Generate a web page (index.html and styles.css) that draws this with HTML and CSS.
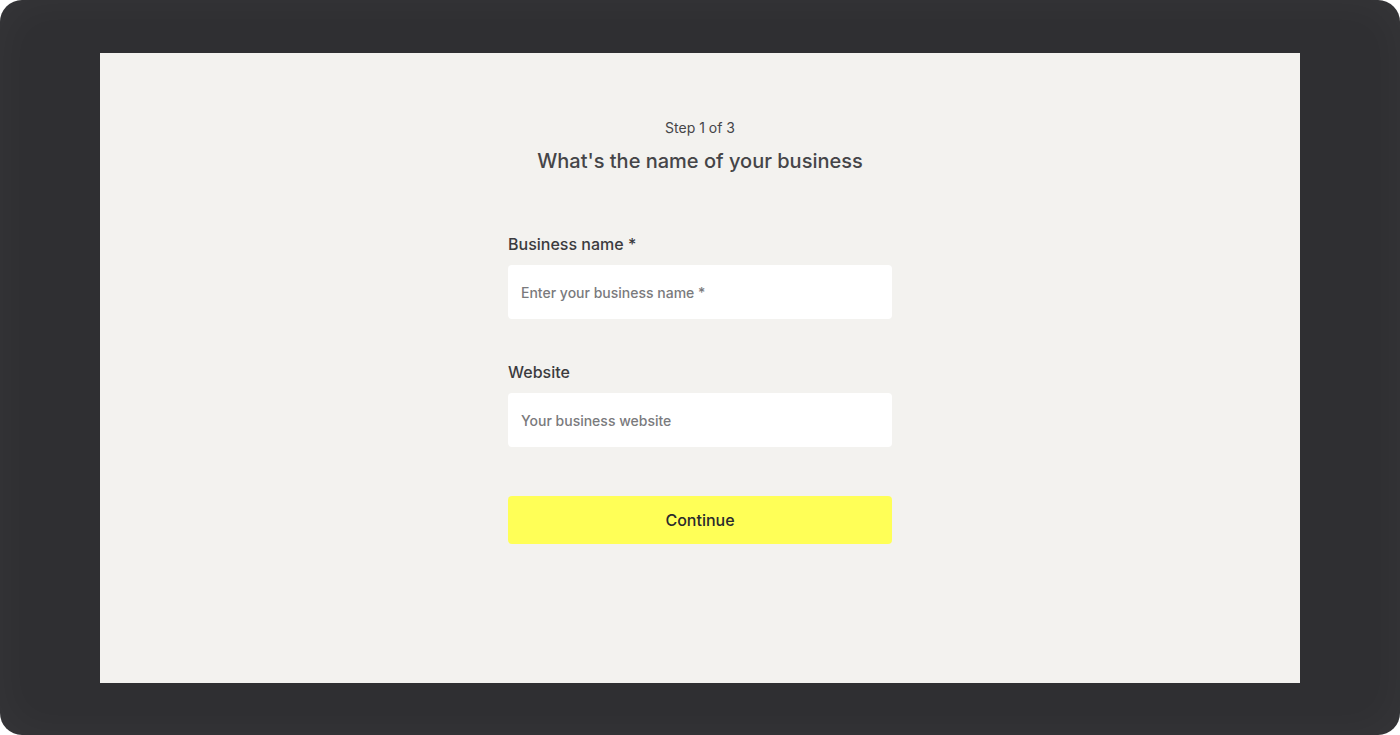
FILE: index.html
```html
<!DOCTYPE html>
<html>
<head>
<meta charset="utf-8">
<link rel="stylesheet" href="styles.css">
</head>
<body>
<div class="frame">
  <main class="panel">
    <div class="form">
      <p class="step">Step 1 of 3</p>
      <h1 class="title">What's the name of your business</h1>
      <div class="field field-first">
        <label class="label" for="bn">Business name *</label>
        <input class="input" id="bn" type="text" placeholder="Enter your business name *">
      </div>
      <div class="field">
        <label class="label" for="ws">Website</label>
        <input class="input" id="ws" type="text" placeholder="Your business website">
      </div>
      <button class="btn" type="button">Continue</button>
    </div>
  </main>
</div>
</body>
</html>
```

FILE: styles.css
```css
* { box-sizing: border-box; }
html, body { margin: 0; padding: 0; background: #ffffff; }
body { font-family: Inter, "Noto Sans", "Liberation Sans", sans-serif; }
.frame {
  width: 1400px;
  height: 735px;
  border-radius: 22px;
  background: #2f2f32;
  box-shadow: inset 0 0 50px rgba(255,255,255,0.035);
  padding: 53px 100px 52px;
}
.panel {
  width: 1200px;
  height: 630px;
  background: #f3f2ef;
  display: flex;
  justify-content: center;
  padding-top: 66px;
}
.form {
  width: 384px;
  display: flex;
  flex-direction: column;
}
.step {
  margin: 0;
  text-align: center;
  font-size: 14px;
  line-height: 17px;
  color: #454548;
}
.title {
  margin: 13px -60px 0;
  text-align: center;
  font-size: 20px;
  line-height: 24px;
  font-weight: 500;
  color: #454548;
  white-space: nowrap;
}
.field { display: flex; flex-direction: column; margin-top: 43px; }
.field-first { margin-top: 61px; }
.label {
  font-size: 16px;
  line-height: 20px;
  font-weight: 500;
  color: #3b3b3e;
  margin-bottom: 11px;
}
.input {
  height: 54px;
  border: none;
  border-radius: 4px;
  background: #ffffff;
  padding: 0 13px;
  font-family: inherit;
  font-size: 14px;
  font-weight: 500;
  color: #333;
  outline: none;
}
.input::placeholder { color: #7a7a7d; }
.btn {
  margin-top: 49px;
  height: 48px;
  border: none;
  border-radius: 4px;
  background: #ffff57;
  font-family: inherit;
  font-size: 16px;
  font-weight: 500;
  color: #2a2a2d;
  cursor: pointer;
}
```
